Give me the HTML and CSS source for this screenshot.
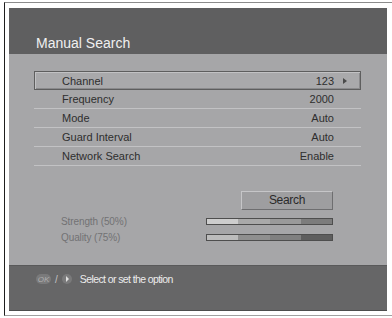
FILE: index.html
```html
<!DOCTYPE html>
<html>
<head>
<meta charset="utf-8">
<link rel="stylesheet" href="styles.css">
</head>
<body>
<div class="frame">
  <div class="panel">
    <div class="header"><span class="title">Manual Search</span></div>
    <div class="content">
      <div class="list">
        <div class="row selected"><span class="label">Channel</span><span class="value">123</span><span class="slot"><span class="arrow"></span></span></div>
        <div class="row"><span class="label">Frequency</span><span class="value">2000</span><span class="slot"></span></div>
        <div class="row"><span class="label">Mode</span><span class="value">Auto</span><span class="slot"></span></div>
        <div class="row"><span class="label">Guard Interval</span><span class="value">Auto</span><span class="slot"></span></div>
        <div class="row"><span class="label">Network Search</span><span class="value">Enable</span><span class="slot"></span></div>
      </div>
      <div class="signal">
        <div class="btn-row"><div class="button">Search</div></div>
        <div class="meter">
          <span class="mlabel">Strength (50%)</span>
          <div class="bar strength"><span></span><span></span><span></span><span></span></div>
        </div>
        <div class="meter">
          <span class="mlabel">Quality (75%)</span>
          <div class="bar quality"><span></span><span></span><span></span><span></span></div>
        </div>
      </div>
    </div>
    <div class="footer">
      <span class="ok">OK</span>
      <span class="slash">/</span>
      <span class="circle"><span class="tri"></span></span>
      <span class="hint">Select or set the option</span>
    </div>
  </div>
</div>
</body>
</html>
```
FILE: styles.css
```css
html, body {
  margin: 0;
  padding: 0;
  background: #ffffff;
}
body {
  width: 392px;
  height: 318px;
  overflow: hidden;
  font-family: "Liberation Sans", Arial, sans-serif;
}
.frame {
  margin: 2px 0 0 4px;
  border-top: 1px solid #8c8c8c;
  border-left: 1px solid #1e1e1e;
  border-bottom: 1px solid #a0a0a0;
  padding: 5px 5px 4px 4px;
  height: 303px;
}
.panel {
  width: 378px;
  height: 303px;
  display: flex;
  flex-direction: column;
  background: #a6a6a8;
}
.header {
  height: 46px;
  box-sizing: border-box;
  background: #5f5f60;
  display: flex;
  align-items: flex-end;
  padding: 0 0 3px 27px;
}
.title {
  color: #f0f0f0;
  font-size: 14px;
  line-height: 16px;
}
.content {
  flex: 1;
  padding-top: 17px;
  display: flex;
  flex-direction: column;
}
.list {
  margin-left: 25px;
  width: 327px;
}
.row {
  height: 19px;
  box-sizing: border-box;
  display: flex;
  align-items: center;
  padding: 0 13px 0 28px;
  font-size: 11px;
  color: #2e2e2e;
  border-bottom: 1px solid #c2c2c4;
}
.row.selected {
  border: 1px solid #5e5e5e;
  box-shadow: inset 1px 1px 0 #c2c2c4, inset -1px -1px 0 #8a8a8c;
  background: #a9a9ab;
  padding-left: 27px;
  padding-right: 12px;
}
.label { flex: 1; }
.slot {
  width: 14px;
  display: flex;
  justify-content: flex-end;
  padding-right: 1px;
  box-sizing: border-box;
}
.arrow {
  width: 0;
  height: 0;
  border-top: 3.5px solid transparent;
  border-bottom: 3.5px solid transparent;
  border-left: 4px solid #4a4a4a;
}
.signal {
  margin-top: 25px;
  margin-left: 52px;
  width: 272px;
  display: flex;
  flex-direction: column;
}
.btn-row {
  display: flex;
  justify-content: flex-end;
  margin-bottom: 3px;
}
.button {
  width: 92px;
  height: 19px;
  box-sizing: border-box;
  border: 1px solid;
  border-color: #c6c6c8 #6e6e70 #6e6e70 #c6c6c8;
  background: #9e9ea0;
  color: #2a2a2a;
  font-size: 12px;
  line-height: 17px;
  text-align: center;
  letter-spacing: -0.3px;
}
.meter {
  height: 16px;
  display: flex;
  align-items: center;
  justify-content: space-between;
}
.mlabel {
  font-size: 10px;
  color: #727274;
  letter-spacing: -0.1px;
}
.bar {
  width: 127px;
  height: 7px;
  box-sizing: border-box;
  border: 1px solid #4e4e4e;
  display: flex;
}
.bar span { flex: 1; }
.strength span:nth-child(1) { background: #cdcdcd; }
.strength span:nth-child(2) { background: #a9a9a9; }
.strength span:nth-child(3) { background: #9a9a9a; }
.strength span:nth-child(4) { background: #7c7c7c; }
.quality span:nth-child(1) { background: #bcbcbc; }
.quality span:nth-child(2) { background: #8f8f8f; }
.quality span:nth-child(3) { background: #808080; }
.quality span:nth-child(4) { background: #5e5e5e; }
.footer {
  height: 46px;
  box-sizing: border-box;
  background: #666667;
  border-top: 1px solid #59595a;
  border-bottom: 1px solid #4c4c4c;
  display: flex;
  align-items: flex-start;
  padding: 7px 0 0 27px;
}
.footer > span { height: 12px; display: flex; align-items: center; }
.ok {
  width: 15px;
  height: 10px !important;
  margin-top: 1px;
  border-radius: 5px;
  background: #7a7a7b;
  color: #b0b0b0;
  font-size: 8px;
  font-style: italic;
  justify-content: center;
}
.slash {
  color: #c4c4c4;
  font-size: 10px;
  margin: 0 4px 0 4px;
}
.circle {
  width: 10px;
  height: 10px !important;
  margin-top: 1px;
  border-radius: 50%;
  background: #7a7a7b;
  justify-content: center;
}
.tri {
  width: 0;
  height: 0;
  margin-left: 1px;
  border-top: 3px solid transparent;
  border-bottom: 3px solid transparent;
  border-left: 3px solid #e0e0e0;
}
.hint {
  margin-left: 8px;
  color: #ececec;
  font-size: 10.5px;
  letter-spacing: -0.6px;
}
```
